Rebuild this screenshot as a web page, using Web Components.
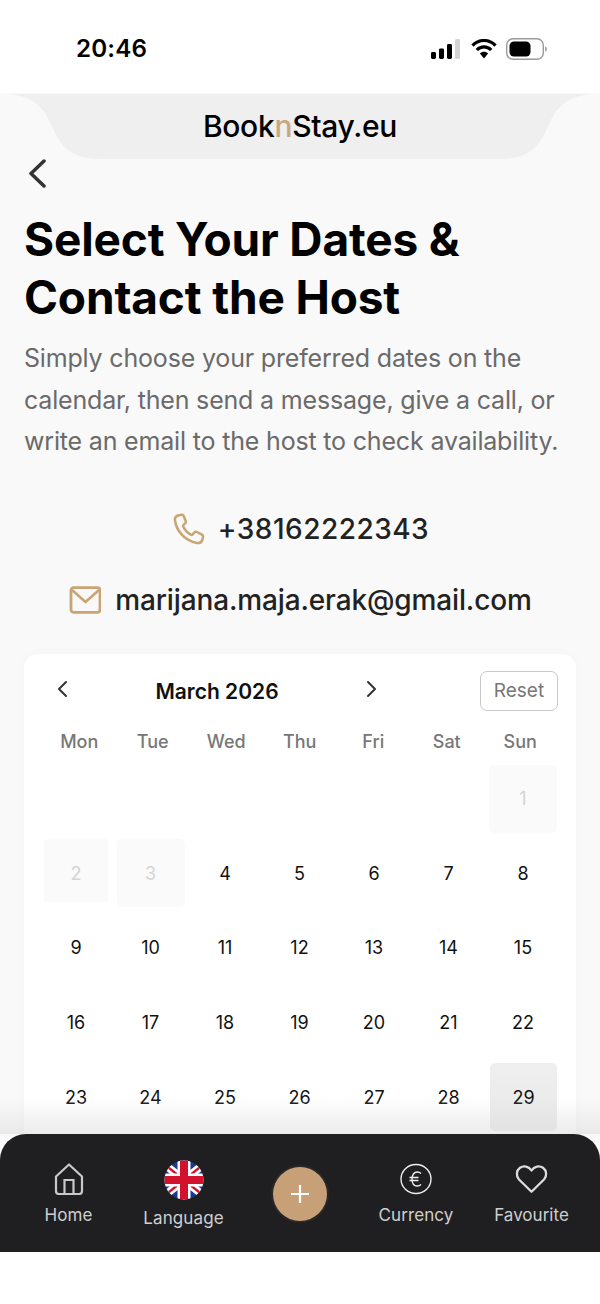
<!DOCTYPE html>
<html lang="en"><head><meta charset="utf-8"><title>BooknStay</title>
<style>
html,body{margin:0;padding:0;background:#fff}
body{font-family:Inter,"Liberation Sans",sans-serif;width:600px;height:1304px;overflow:hidden}
</style></head><body>
<app-screen>
  <status-bar slot="status"></status-bar>
  <brand-header></brand-header>
  <back-link></back-link>
  <intro-block></intro-block>
  <contact-row kind="phone">+38162222343</contact-row>
  <contact-row kind="mail">marijana.maja.erak@gmail.com</contact-row>
  <date-calendar></date-calendar>
  <tab-bar slot="tabs"></tab-bar>
</app-screen>
<script>
function def(name, css, html, init){
  customElements.define(name, class extends HTMLElement{
    connectedCallback(){
      if(this.shadowRoot) return;
      const r=this.attachShadow({mode:'open'});
      r.innerHTML='<style>'+css+'</style>'+(typeof html==='function'?html(this):html);
      if(init) init(r,this);
    }
  });
}
def('app-screen',`
:host{display:block;position:relative;width:600px;height:1304px;overflow:hidden;background:#fff}
.page{height:1159px;background:#f9f9f9;overflow:hidden}
.tabs{position:absolute;left:0;right:0;top:1134px}
.fade{position:absolute;left:0;right:0;top:1098px;height:36px;background:linear-gradient(rgba(235,235,235,0),rgba(222,222,222,.6))}
`,`<slot name="status"></slot><div class="page"><slot></slot></div><div class="fade"></div><div class="tabs"><slot name="tabs"></slot></div>`);

def('status-bar',`
:host{display:flex;align-items:center;justify-content:space-between;height:93px;box-sizing:border-box;padding:10px 53px 6px 76px;background:#fff}
.t{font:600 24.2px Inter,sans-serif;color:#000;letter-spacing:.15px}
.i{display:flex;align-items:center;gap:10px;margin-top:1px}
svg{display:block}
`,`<span class="t">20:46</span><span class="i">
<svg width="29" height="20" viewBox="0 0 29 20"><rect x="0" y="13" width="5" height="7" rx="1.4" fill="#000"/><rect x="8" y="9.5" width="5" height="10.5" rx="1.4" fill="#000"/><rect x="16" y="5" width="5" height="15" rx="1.4" fill="#000"/><rect x="24" y="0" width="5" height="20" rx="1.4" fill="#d4d4d4"/></svg>
<svg width="26" height="20" viewBox="0 0 26 20" style="margin-left:1px;margin-right:-1px"><path d="M1.500 6.600C8-.2 18-.2 24.500 6.600" fill="none" stroke="#000" stroke-width="3.200"/><path d="M5.800 11C9.800 6.700 16.200 6.700 20.200 11" fill="none" stroke="#000" stroke-width="3.200"/><path d="M8.900 14.400 13 19.600l4.100-5.200c-2.300-2.300-5.900-2.300-8.200 0z" fill="#000"/></svg>
<svg width="41" height="22" viewBox="0 0 41 22"><rect x=".7" y=".7" width="36.600" height="20.600" rx="6.500" fill="none" stroke="#9a9a9a" stroke-width="1.400"/><rect x="3.500" y="3.500" width="21" height="15" rx="4.500" fill="#000"/><path d="M39 8.200c1.300.5 2 1.500 2 2.800s-.7 2.300-2 2.800z" fill="#a8a8a8"/></svg>
</span>`);

def('brand-header',`
:host{display:block;position:relative;height:66px}
svg{position:absolute;left:0;top:0}
.w{position:relative;display:flex;justify-content:center;align-items:center;height:66px;font:500 30px Inter,sans-serif;color:#000;letter-spacing:-.3px}
b{font-weight:500;color:#c9a77f}
`,`<svg width="600" height="66" viewBox="0 0 600 66"><path d="M6 1 H594 C570 2 558 12 550 29 C542 46 536 66 500 66 H100 C64 66 58 46 50 29 C42 12 30 2 6 1 Z" fill="#efefef"/></svg><div class="w"><span>Book<b>n</b>Stay.eu</span></div>`);

def('back-link',`
:host{display:block;height:30px;padding-left:24px}
svg{display:block}
`,`<svg width="28" height="30" viewBox="0 0 28 30"><path d="M20 2 7 14.500 20 27" fill="none" stroke="#333" stroke-width="3.500" stroke-linecap="round" stroke-linejoin="round"/></svg>`);

def('intro-block',`
:host{display:block;padding:21px 24px 0}
h1{margin:0;font:700 46px/58px Inter,sans-serif;color:#000;letter-spacing:-.16px}
p{margin:12px 0 0;font:400 25px/41.5px Inter,sans-serif;color:#6a6a6a;white-space:nowrap;letter-spacing:-.175px}
`,`<h1>Select Your Dates &amp;<br>Contact the Host</h1><p>Simply choose your preferred dates on the<br>calendar, then send a message, give a call, or<br>write an email to the host to check availability.</p>`);

const ICONS={
 phone:`<svg width="32" height="32" viewBox="0 0 32 32"><path d="M8.500 1.700 5 2.500C2.800 3.200 1.600 5.200 2 7.500 3.300 17.500 11.500 27.500 24 30c2.500.4 4.500-.6 5.300-3l.7-3c.2-1-.2-1.900-1.100-2.400l-5-2.600c-.9-.5-1.900-.3-2.600.5l-1.600 1.900c-.5.5-1.200.7-1.900.3-3.300-1.800-5.900-4.700-7.500-8-.3-.7-.2-1.400.3-1.900l1.500-1.500c.7-.7.9-1.700.5-2.600L10.700 3c-.4-1-1.200-1.500-2.200-1.300z" fill="none" stroke="#c9a474" stroke-width="2.500" stroke-linejoin="round"/></svg>`,
 mail:`<svg width="32" height="30" viewBox="0 0 32 30"><rect x="2" y="2.700" width="29" height="24.600" rx="2.500" fill="none" stroke="#c9a474" stroke-width="2.800"/><path d="M3 5 16.500 17 30 5" fill="none" stroke="#c9a474" stroke-width="2.600" stroke-linejoin="round"/></svg>`};
def('contact-row',`
:host{display:flex;justify-content:center;align-items:center;gap:14px;height:40px;font:500 28px Inter,sans-serif;color:#222}
:host([kind=phone]){margin-top:46px;letter-spacing:.5px;margin-left:2px;gap:13px}
:host([kind=mail]){margin-top:31px;letter-spacing:-.14px;margin-left:1px}
svg{display:block}
`,h=>ICONS[h.getAttribute('kind')]+'<slot></slot>');

def('date-calendar',`
:host{display:block;margin:34px 24px 0;background:#fff;border-radius:14px 14px 0 0;box-shadow:0 0 12px rgba(0,0,0,.025);padding:17px 18px 0 20px;height:600px;box-sizing:border-box}
.head{display:flex;align-items:center;height:41px}
.nav{width:38px;display:flex;justify-content:center;margin-top:-5px}
.title{width:270px;text-align:center;font:600 21px Inter,sans-serif;color:#111}
.reset{margin-left:auto;width:78px;height:40px;box-sizing:border-box;border:1.500px solid #c9c9c9;border-radius:7px;font:400 19px/38px Inter,sans-serif;color:#777;text-align:center}
.dow{display:grid;grid-template-columns:repeat(7,73.500px);margin-top:10px;height:40px;align-items:center;margin-left:-1.500px}
.dow span{text-align:center;font:500 18px Inter,sans-serif;color:#777}
.days{display:grid;grid-template-columns:repeat(7,68px);column-gap:6.500px;row-gap:6.650px;grid-auto-rows:68px;margin-top:3px;margin-left:-2px}
.d{display:flex;align-items:center;justify-content:center;font:400 18px Inter,sans-serif;color:#111;border-radius:5px}
.off{background:#fafafa;color:#d4d4d4}
.two{background:linear-gradient(#fafafa,#fafafa) 2px 0/64px 63px no-repeat}
.sel{background:linear-gradient(#efefef,#e8e8e8);margin-left:1px}
`,()=>{
  const dow=['Mon','Tue','Wed','Thu','Fri','Sat','Sun'].map(x=>`<span>${x}</span>`).join('');
  let cells='<div></div>'.repeat(6);
  for(let i=1;i<=31;i++){const c=i===2?'d off two':i<=3?'d off':i===29?'d sel':'d';cells+=`<div class="${c}">${i}</div>`;}
  return `<div class="head"><div class="nav"><svg width="14" height="18" viewBox="0 0 14 18"><path d="M10 2 3 9l7 7" fill="none" stroke="#333" stroke-width="2" stroke-linecap="round" stroke-linejoin="round"/></svg></div><div class="title">March 2026</div><div class="nav r"><svg width="14" height="18" viewBox="0 0 14 18"><path d="M4 2l7 7-7 7" fill="none" stroke="#333" stroke-width="2" stroke-linecap="round" stroke-linejoin="round"/></svg></div><div class="reset">Reset</div></div><div class="dow">${dow}</div><div class="days">${cells}</div>`;
});

def('tab-item',`
:host{display:flex;flex-direction:column;align-items:center;justify-content:flex-start;font:400 17px Inter,sans-serif;color:#cfcfcf;letter-spacing:.12px}
.ic{height:36px;display:flex;align-items:center;justify-content:center}
.l{margin-top:8px;white-space:nowrap}
svg{display:block}
`,`<div class="ic"><slot name="icon"></slot></div><div class="l"><slot></slot></div>`);

def('tab-bar',`
:host{display:block;height:118px;background:#1f1f21;border-radius:26px 26px 0 0;position:relative}
.row{display:grid;grid-template-columns:137px 94px 1fr 94px 137px;height:118px;padding-top:27px;box-sizing:border-box}
.plus{justify-self:center;width:54px;height:54px;margin:6px auto 0;border-radius:50%;background:#c8a077;display:flex;align-items:center;justify-content:center;box-shadow:0 0 0 2px #282828}
svg{display:block}
`,`<div class="row">
<tab-item><svg slot="icon" width="30" height="32" viewBox="0 0 30 32"><path d="M2 13.500 15 1.500l13 12V28c0 2-1 3-3 3H5c-2 0-3-1-3-3z" fill="none" stroke="#c9c9c9" stroke-width="2.200" stroke-linejoin="round"/><path d="M10.500 31V17h9v14" fill="none" stroke="#c9c9c9" stroke-width="2.200"/></svg>Home</tab-item>
<tab-item style="margin-left:-1px"><svg slot="icon" width="40" height="40" viewBox="0 0 40 40" style="margin-top:2px"><defs><clipPath id="c"><circle cx="20" cy="20" r="19.500"/></clipPath></defs><g clip-path="url(#c)"><rect width="40" height="40" fill="#1a3a8f"/><path d="M0 4 40 36M40 4 0 36" stroke="#fff" stroke-width="8"/><path d="M0 4 40 36M40 4 0 36" stroke="#d2132e" stroke-width="2.500"/><path d="M20 0V40M0 20H40" stroke="#fff" stroke-width="13"/><path d="M20 0V40M0 20H40" stroke="#d2132e" stroke-width="8"/></g></svg><span style="margin-top:3px;display:block">Language</span></tab-item>
<div><div class="plus"><svg width="20" height="20" viewBox="0 0 20 20"><path d="M10 1v18M1 10h18" stroke="#fff" stroke-width="2.200"/></svg></div></div>
<tab-item><svg slot="icon" width="32" height="32" viewBox="0 0 32 32"><ellipse cx="16" cy="16" rx="15" ry="14.500" fill="none" stroke="#eee" stroke-width="1.400"/><path d="M21 10.500c-1-1-2.300-1.500-3.700-1.500-3.300 0-5.300 2.900-5.300 7s2 7 5.300 7c1.400 0 2.700-.5 3.700-1.500M9.500 14.500h9M9.500 17.500h9" fill="none" stroke="#eee" stroke-width="1.400"/></svg>Currency</tab-item>
<tab-item style="letter-spacing:.02px"><svg slot="icon" width="33" height="30" viewBox="0 0 33 30"><path d="M16.500 27.800 4 15.500C.8 12 1.300 6.500 5 3.800 8.800 1.200 13.800 2.300 16.500 6.500 19.200 2.300 24.200 1.200 28 3.800c3.700 2.700 4.200 8.200 1 11.700z" fill="none" stroke="#dcdcdc" stroke-width="2.300" stroke-linejoin="round"/></svg>Favourite</tab-item>
</div>`);
</script>
</body></html>
